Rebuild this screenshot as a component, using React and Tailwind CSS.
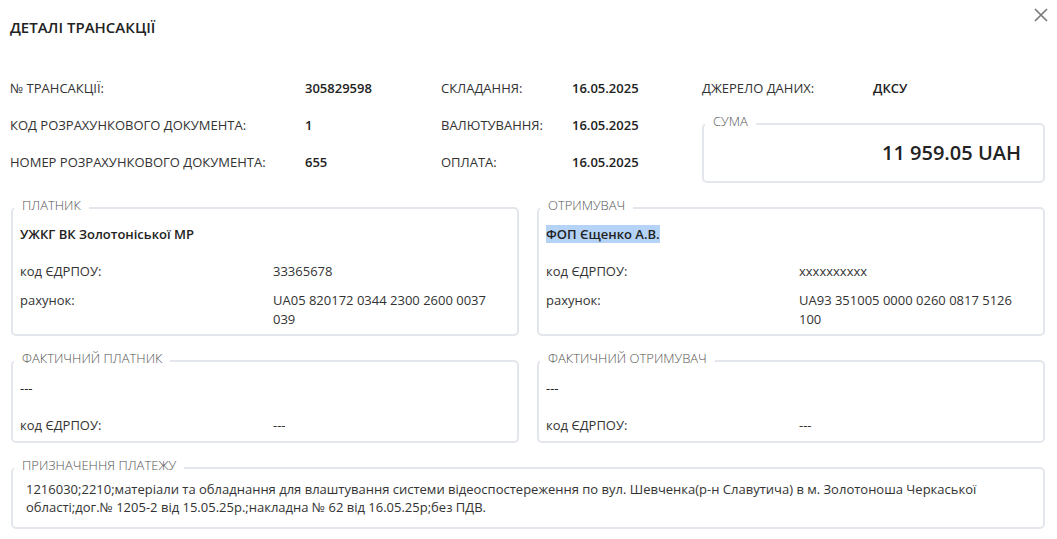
import React from "react";

function Box({ title, children, className = "" }) {
  return (
    <fieldset className={"border-2 border-[#e3e6ec] rounded-[5px] min-w-0 p-0 " + className}>
      <legend className="ml-[1px] px-[8px] pb-[6px] text-[13px] leading-[18px] text-[#555] font-light">{title}</legend>
      {children}
    </fieldset>
  );
}

function Party({ title, name, highlight, code, account, actual }) {
  return (
    <Box title={title} className="flex-1">
      <div className="px-[7px]">
        <div className={"text-[13px] leading-[20px] text-[#222] " + (actual ? "pt-[5px]" : "font-semibold pt-[4px]")}>
          {highlight ? <span className="bg-[#b4d3f7]">{name}</span> : name}
        </div>
        <div className={"grid grid-cols-[253px_1fr] text-[13px] leading-[19px] text-[#333] mt-[18px] " + (actual ? "pb-[6px]" : "pb-[5px]")}>
          <div>код ЄДРПОУ:</div>
          <div>{code}</div>
          {account && (
            <>
              <div className="mt-[10px]">рахунок:</div>
              <div className="mt-[10px] pr-[8px]">{account}</div>
            </>
          )}
        </div>
      </div>
    </Box>
  );
}

export default function App() {
  const label = "text-[13px] text-[#333] font-normal";
  const value = "text-[13px] text-[#222] font-semibold";
  return (
    <div className="w-[1057px] h-[539px] bg-white relative overflow-hidden" style={{ fontFamily: '"Open Sans", "Noto Sans", sans-serif' }}>
      <button className="absolute right-[8px] top-[7px] text-[#777]">
        <svg width="16" height="16" viewBox="0 0 16 16" fill="none" stroke="currentColor" strokeWidth="1.6">
          <path d="M2 2L14 14M14 2L2 14" />
        </svg>
      </button>
      <div className="pl-[10px] pr-[12px]">
        <div className="pt-[16px] text-[15px] leading-[22px] font-semibold text-[#222]">ДЕТАЛІ ТРАНСАКЦІЇ</div>
        <div className="mt-[32px] grid grid-cols-[295px_136px_131px_130px_171px_1fr] auto-rows-[37px] items-center">
          <div className={label}>№ ТРАНСАКЦІЇ:</div>
          <div className={value}>305829598</div>
          <div className={label}>СКЛАДАННЯ:</div>
          <div className={value}>16.05.2025</div>
          <div className={label}>ДЖЕРЕЛО ДАНИХ:</div>
          <div className={value}>ДКСУ</div>

          <div className={label}>КОД РОЗРАХУНКОВОГО ДОКУМЕНТА:</div>
          <div className={value}>1</div>
          <div className={label}>ВАЛЮТУВАННЯ:</div>
          <div className={value}>16.05.2025</div>
          <div className="col-start-5 col-span-2 row-start-2 row-span-2 self-start mt-[5px]">
            <Box title="СУМА">
              <div className="px-[22px] pb-[14px] pt-[3px] text-right text-[20px] leading-[28px] font-semibold text-[#222]">11 959.05 UAH</div>
            </Box>
          </div>

          <div className={label}>НОМЕР РОЗРАХУНКОВОГО ДОКУМЕНТА:</div>
          <div className={value}>655</div>
          <div className={label}>ОПЛАТА:</div>
          <div className={value}>16.05.2025</div>
        </div>

        <div className="mt-[15px] pl-[1px] flex gap-[18px]">
          <Party title="ПЛАТНИК" name="УЖКГ ВК Золотоніської МР" code="33365678" account="UA05 820172 0344 2300 2600 0037 039" />
          <Party title="ОТРИМУВАЧ" name="ФОП Єщенко А.В." highlight code="xxxxxxxxxx" account="UA93 351005 0000 0260 0817 5126 100" />
        </div>
        <div className="mt-[13px] pl-[1px] flex gap-[18px]">
          <Party title="ФАКТИЧНИЙ ПЛАТНИК" name="---" actual code="---" />
          <Party title="ФАКТИЧНИЙ ОТРИМУВАЧ" name="---" actual code="---" />
        </div>
        <div className="mt-[13px] pl-[1px]">
          <Box title="ПРИЗНАЧЕННЯ ПЛАТЕЖУ">
            <div className="px-[13px] pb-[11px] text-[13px] leading-[18px] text-[#333]">
              1216030;2210;матеріали та обладнання для влаштування системи відеоспостереження по вул. Шевченка(р-н Славутича) в м. Золотоноша Черкаської області;дог.№ 1205-2 від 15.05.25р.;накладна № 62 від 16.05.25р;без ПДВ.
            </div>
          </Box>
        </div>
      </div>
    </div>
  );
}
